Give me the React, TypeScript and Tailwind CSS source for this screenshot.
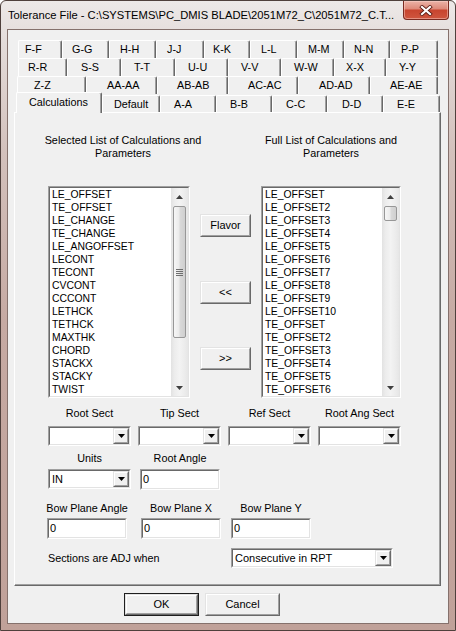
import React from "react";

const UIFONT = "font-['Liberation_Sans',Arial,sans-serif]";

type Kids = { className?: string; children?: React.ReactNode };

function Sunken({ className = "", children }: Kids) {
  return (
    <div className={"border border-t-[#a0a0a0] border-l-[#a0a0a0] border-b-white border-r-white " + className}>
      <div className="w-full h-full border border-t-[#696969] border-l-[#696969] border-b-[#e3e3e3] border-r-[#e3e3e3] bg-white flex overflow-hidden">
        {children}
      </div>
    </div>
  );
}

function Raised({ className = "", children }: Kids) {
  return (
    <div className={"border border-t-[#e3e3e3] border-l-[#e3e3e3] border-b-[#696969] border-r-[#696969] bg-[#f0f0f0] " + className}>
      <div className="w-full h-full border border-t-white border-l-white border-b-[#a0a0a0] border-r-[#a0a0a0] flex items-center justify-center">
        {children}
      </div>
    </div>
  );
}

function PushButton({ className = "", children, isDefault = false }: Kids & { isDefault?: boolean }) {
  if (isDefault) {
    return (
      <div className={"border border-[#1e1e1e] " + className}>
        <Raised className="w-full h-full text-[11px] leading-[13px]">{children}</Raised>
      </div>
    );
  }
  return <Raised className={"text-[11px] leading-[13px] " + className}>{children}</Raised>;
}

function DownArrow() {
  return (
    <svg width="7" height="4" viewBox="0 0 7 4">
      <path d="M0 0H7L3.5 4Z" fill="#000" />
    </svg>
  );
}

function Combo({ className = "", value = "" }: { className?: string; value?: string }) {
  return (
    <Sunken className={className}>
      <div className="flex-1 pl-[2px] text-[11px] leading-[16px] whitespace-nowrap overflow-hidden">{value}</div>
      <Raised className="w-[16px] h-[16px]">
        <DownArrow />
      </Raised>
    </Sunken>
  );
}

function Edit({ className = "", value = "" }: { className?: string; value?: string }) {
  return (
    <Sunken className={className}>
      <div className="flex-1 pl-[1px] text-[11px] leading-[17px]">{value}</div>
    </Sunken>
  );
}

function ScrollArrow({ up }: { up: boolean }) {
  return (
    <div className="h-[17px] flex items-center justify-center">
      <svg width="7" height="4" viewBox="0 0 7 4">
        {up ? <path d="M0 4H7L3.5 0Z" fill="#3f3f3f" /> : <path d="M0 0H7L3.5 4Z" fill="#3f3f3f" />}
      </svg>
    </div>
  );
}

function Scrollbar({ thumbClass, grip }: { thumbClass: string; grip: boolean }) {
  return (
    <div className="w-[17px] h-full flex flex-col bg-[linear-gradient(90deg,#e2e2e2,#ececec_20%,#f3f3f3_50%,#ececec_80%,#e6e6e6)]">
      <ScrollArrow up={true} />
      <div className="flex-1 flex flex-col items-center">
        <div
          className={
            "mt-[1px] w-[13px] rounded-[2px] border border-[#979797] bg-[linear-gradient(90deg,#f6f6f6,#ebebeb_45%,#d9d9d9_55%,#cfcfcf)] flex flex-col items-center justify-center gap-[1px] " +
            thumbClass
          }
        >
          {grip && (
            <>
              <div className="w-[7px] h-[1px] bg-[#6e6e6e]" />
              <div className="w-[7px] h-[1px] bg-[#6e6e6e]" />
              <div className="w-[7px] h-[1px] bg-[#6e6e6e]" />
              <div className="w-[7px] h-[1px] bg-[#6e6e6e]" />
            </>
          )}
        </div>
      </div>
      <ScrollArrow up={false} />
    </div>
  );
}

function ListBox({ className, items, thumbClass, grip }: { className: string; items: string[]; thumbClass: string; grip: boolean }) {
  return (
    <Sunken className={className}>
      <div className="flex-1 overflow-hidden">
        {items.map((it, i) => (
          <div key={i} className="pl-[2px] h-[13px] leading-[13px] text-[10.4px] whitespace-nowrap">
            {it}
          </div>
        ))}
      </div>
      <Scrollbar thumbClass={thumbClass} grip={grip} />
    </Sunken>
  );
}

const row1: [string, string][] = [
  ["F-F", "w-[44px] pl-[6px]"],
  ["G-G", "w-[47px] pl-[9px]"],
  ["H-H", "w-[47px] pl-[10px]"],
  ["J-J", "w-[48px] pl-[10px]"],
  ["K-K", "w-[46px] pl-[8px]"],
  ["L-L", "w-[47px] pl-[10px]"],
  ["M-M", "w-[47px] pl-[10px]"],
  ["N-N", "w-[46px] pl-[9px]"],
  ["P-P", "w-[48px] pl-[10px]"],
];
const row2: [string, string][] = [
  ["R-R", "w-[49px] pl-[9px]"],
  ["S-S", "w-[54px] pl-[13px]"],
  ["T-T", "w-[54px] pl-[12px]"],
  ["U-U", "w-[53px] pl-[12px]"],
  ["V-V", "w-[53px] pl-[12px]"],
  ["W-W", "w-[53px] pl-[12px]"],
  ["X-X", "w-[52px] pl-[11px]"],
  ["Y-Y", "w-[52px] pl-[12px]"],
];
const row3: [string, string][] = [
  ["Z-Z", "w-[69px] pl-[16px]"],
  ["AA-AA", "w-[71px] pl-[20px]"],
  ["AB-AB", "w-[71px] pl-[19px]"],
  ["AC-AC", "w-[70px] pl-[19px]"],
  ["AD-AD", "w-[72px] pl-[20px]"],
  ["AE-AE", "w-[68px] pl-[19px]"],
];
const row4: [string, string][] = [
  ["Default", "w-[58px] pl-[11px]"],
  ["A-A", "w-[56px] pl-[13px]"],
  ["B-B", "w-[56px] pl-[13px]"],
  ["C-C", "w-[55px] pl-[13px]"],
  ["D-D", "w-[56px] pl-[14px]"],
  ["E-E", "w-[57px] pl-[13px]"],
];

const TAB =
  "border-t border-l border-r border-t-white border-l-white border-r-[#696969] shadow-[inset_-1px_0_0_#a0a0a0] rounded-t-[2px] bg-[#f0f0f0] flex whitespace-nowrap text-[10.8px] leading-[13px]";

function TabRow({ tabs, className }: { tabs: [string, string][]; className: string }) {
  return (
    <div className={"h-[18px] flex " + className}>
      {tabs.map(([t, c]) => (
        <div key={t} className={TAB + " h-[18px] items-center " + c}>
          {t}
        </div>
      ))}
    </div>
  );
}

const leftItems = [
  "LE_OFFSET",
  "TE_OFFSET",
  "LE_CHANGE",
  "TE_CHANGE",
  "LE_ANGOFFSET",
  "LECONT",
  "TECONT",
  "CVCONT",
  "CCCONT",
  "LETHCK",
  "TETHCK",
  "MAXTHK",
  "CHORD",
  "STACKX",
  "STACKY",
  "TWIST",
  "LEANGLE",
];
const rightItems = [
  "LE_OFFSET",
  "LE_OFFSET2",
  "LE_OFFSET3",
  "LE_OFFSET4",
  "LE_OFFSET5",
  "LE_OFFSET6",
  "LE_OFFSET7",
  "LE_OFFSET8",
  "LE_OFFSET9",
  "LE_OFFSET10",
  "TE_OFFSET",
  "TE_OFFSET2",
  "TE_OFFSET3",
  "TE_OFFSET4",
  "TE_OFFSET5",
  "TE_OFFSET6",
  "TE_OFFSET7",
];

function Label({ children, className = "" }: Kids) {
  return (
    <div className={"h-[13px] leading-[13px] flex justify-center whitespace-nowrap " + className}>
      <span>{children}</span>
    </div>
  );
}

export default function App() {
  return (
    <div className="w-[456px] h-[631px] border border-[#4f403c] rounded-t-[6px] overflow-hidden flex flex-col bg-[linear-gradient(180deg,#ede9e8_0px,#e4dcda_40px,#d3c1bc_150px,#c6aaa3_320px,#c0a199_100%)]">
      {/* title bar */}
      <div className="h-[28px] flex shrink-0">
        <div className="flex-1 pl-[7px] flex items-center text-[11.2px] font-['Liberation_Sans',Arial,sans-serif] text-black whitespace-nowrap overflow-hidden">
          Tolerance File - C:\SYSTEMS\PC_DMIS BLADE\2051M72_C\2051M72_C.T...
        </div>
        <div className="w-[46px] h-[19px] mr-[6px] rounded-b-[4px] border border-t-0 border-[#7a2b21] bg-[linear-gradient(180deg,#ebb3a7_0%,#de8b7b_42%,#c8452f_52%,#cf563f_100%)] shadow-[inset_0_0_0_1px_rgba(255,220,210,0.45)] flex items-center justify-center">
          <svg width="14" height="11" viewBox="0 0 14 11">
            <path d="M3 2L11 9M11 2L3 9" stroke="#5b1b12" strokeWidth="3.8" strokeLinecap="square" />
            <path d="M3 2L11 9M11 2L3 9" stroke="#ffffff" strokeWidth="2.2" strokeLinecap="square" />
          </svg>
        </div>
      </div>

      {/* client */}
      <div className={"ml-[6px] w-[442px] h-[595px] border border-[#85716c] bg-[#f0f0f0] pl-[6px] pt-[10px] flex flex-col text-black " + UIFONT}>
        <TabRow tabs={row1} className="pl-[4px]" />
        <TabRow tabs={row2} className="pl-[4px]" />
        <TabRow tabs={row3} className="pl-[3px]" />
        <div className="h-[18px] flex items-start pl-[2px]">
          <div className={TAB + " relative z-10 -mt-[2px] h-[21px] w-[86px] pl-[12px] pt-[3px] items-start"}>Calculations</div>
          {row4.map(([t, c]) => (
            <div key={t} className={TAB + " mt-[1px] h-[17px] items-center " + c}>
              {t}
            </div>
          ))}
        </div>

        {/* panel */}
        <div className="w-[427px] h-[474px] border border-t-white border-l-white border-b-[#696969] border-r-[#696969] shadow-[inset_-1px_-1px_0_#a0a0a0] pl-[33px] pt-[21px] flex flex-col text-[10.8px]">
          <div className="flex items-start">
            <div className="w-[142px] flex flex-col">
              <div className="ml-[4px] w-[142px] flex flex-col items-center leading-[13px] whitespace-nowrap">
                <span>Selected List of Calculations and</span>
                <span>Parameters</span>
              </div>
              <ListBox className="mt-[26px] w-[142px] h-[212px]" items={leftItems} thumbClass="h-[132px]" grip={true} />
            </div>
            <div className="ml-[10px] w-[51px] flex flex-col">
              <PushButton className="mt-[80px] h-[23px]">Flavor</PushButton>
              <PushButton className="mt-[44px] h-[23px]">&lt;&lt;</PushButton>
              <PushButton className="mt-[43px] h-[23px]">&gt;&gt;</PushButton>
            </div>
            <div className="ml-[10px] w-[140px] flex flex-col">
              <div className="w-[140px] flex flex-col items-center leading-[13px] whitespace-nowrap">
                <span>Full List of Calculations and</span>
                <span>Parameters</span>
              </div>
              <ListBox className="mt-[26px] w-[140px] h-[212px]" items={rightItems} thumbClass="h-[15px]" grip={false} />
            </div>
          </div>

          <div className="mt-[9px] grid grid-cols-[83px_83px_83px_83px] gap-x-[7px] gap-y-[6px]">
            <Label>Root Sect</Label>
            <Label>Tip Sect</Label>
            <Label>Ref Sect</Label>
            <Label>Root Ang Sect</Label>
            <Combo className="h-[20px]" />
            <Combo className="h-[20px]" />
            <Combo className="h-[20px]" />
            <Combo className="h-[20px]" />
          </div>

          <div className="mt-[6px] flex">
            <div className="w-[83px] flex flex-col">
              <Label>Units</Label>
              <Combo className="mt-[4px] h-[20px]" value="IN" />
            </div>
            <div className="ml-[9px] w-[80px] flex flex-col">
              <Label>Root Angle</Label>
              <Edit className="mt-[4px] h-[21px]" value="0" />
            </div>
          </div>

          <div className="mt-[12px] flex -ml-[1px]">
            <div className="w-[80px] flex flex-col">
              <Label>Bow Plane Angle</Label>
              <Edit className="mt-[3px] h-[21px]" value="0" />
            </div>
            <div className="ml-[14px] w-[80px] flex flex-col">
              <Label>Bow Plane X</Label>
              <Edit className="mt-[3px] h-[21px]" value="0" />
            </div>
            <div className="ml-[10px] w-[80px] flex flex-col">
              <Label>Bow Plane Y</Label>
              <Edit className="mt-[3px] h-[21px]" value="0" />
            </div>
          </div>

          <div className="mt-[9px] flex items-center">
            <div className="w-[183px] leading-[13px] whitespace-nowrap">Sections are ADJ when</div>
            <Combo className="w-[162px] h-[20px]" value="Consecutive in RPT" />
          </div>
        </div>

        <div className="mt-[7px] ml-[110px] flex gap-[6px]">
          <PushButton isDefault className="w-[75px] h-[23px]">OK</PushButton>
          <PushButton className="w-[75px] h-[23px]">Cancel</PushButton>
        </div>
      </div>
    </div>
  );
}
